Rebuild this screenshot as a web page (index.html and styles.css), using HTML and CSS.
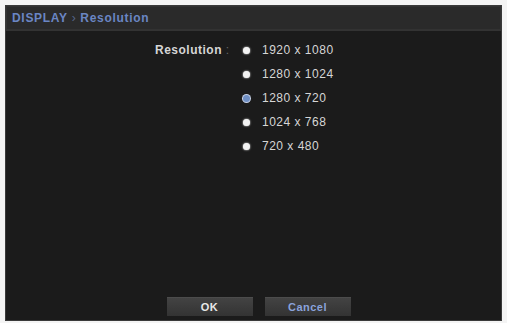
FILE: index.html
```html
<!DOCTYPE html>
<html lang="en">
<head>
    <meta charset="UTF-8">
    <meta name="viewport" content="width=device-width, initial-scale=1.0">
    <title>Display Resolution</title>
    <link rel="stylesheet" href="styles.css">
</head>
<body>
    <div class="panel">
        <div class="title-bar">DISPLAY <span class="sep">›</span> Resolution</div>
        <div class="content">
            <div class="form-row">
                <div class="label">Resolution <span class="colon">:</span></div>
                <ul class="options">
                    <li class="option"><span class="radio"></span>1920 x 1080</li>
                    <li class="option"><span class="radio"></span>1280 x 1024</li>
                    <li class="option selected"><span class="radio"></span>1280 x 720</li>
                    <li class="option"><span class="radio"></span>1024 x 768</li>
                    <li class="option"><span class="radio"></span>720 x 480</li>
                </ul>
            </div>
        </div>
        <div class="footer">
            <button class="btn">OK</button>
            <button class="btn btn-cancel">Cancel</button>
        </div>
    </div>
</body>
</html>
```

FILE: styles.css
```css
body {
    margin: 0;
    padding: 6px 5px 3px 6px;
    background: #f4f4f4;
    font-family: 'Liberation Sans', Arial, sans-serif;
}

.panel {
    width: 495px;
    height: 314px;
    background: #1b1b1b;
    display: flex;
    flex-direction: column;
    box-shadow: 0 0 0 1px #3a3a3a;
}

.title-bar {
    height: 24px;
    line-height: 25px;
    padding-left: 6px;
    background: #2a2a2a;
    border-bottom: 1px solid #333;
    box-shadow: inset 0 0 0 1px #323232;
    color: #6a86c4;
    font-size: 12px;
    font-weight: bold;
    letter-spacing: 0.7px;
}

.title-bar .sep {
    color: #55658a;
    font-weight: normal;
}

.content {
    flex: 1;
    padding: 12px 0 0 149px;
}

.form-row {
    display: flex;
}

.label {
    width: 88px;
    color: #d6d6d6;
    font-size: 12px;
    font-weight: bold;
    letter-spacing: 0.5px;
    line-height: 14px;
}

.label .colon {
    color: #666;
    font-weight: normal;
}

.options {
    list-style: none;
    margin: 0;
    padding: 0;
    display: flex;
    flex-direction: column;
    gap: 10px;
}

.option {
    display: flex;
    align-items: center;
    gap: 12px;
    color: #d6d6d6;
    font-size: 12px;
    letter-spacing: 0.5px;
    line-height: 14px;
}

.radio {
    width: 7px;
    height: 7px;
    border-radius: 50%;
    background: #f2f2f2;
    box-shadow: 0 0 2px #fff;
}

.option.selected .radio {
    background: #6f8fc4;
    box-shadow: 0 0 0 1px #c9d4ea;
}

.footer {
    display: flex;
    justify-content: center;
    gap: 12px;
    padding: 0 0 4px 10px;
}

.btn {
    width: 86px;
    height: 19px;
    border: none;
    background: linear-gradient(#444, #333);
    box-shadow: inset 0 1px 0 #4c4c4c;
    color: #e8e8e8;
    font-family: 'Liberation Sans', Arial, sans-serif;
    font-size: 11px;
    font-weight: bold;
    letter-spacing: 0.5px;
    padding: 0;
}

.btn-cancel {
    color: #8aa3dc;
}
```
